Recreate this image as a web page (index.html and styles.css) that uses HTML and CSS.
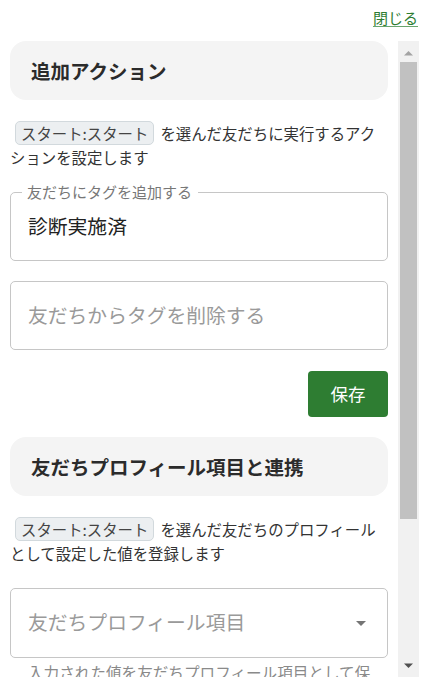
FILE: index.html
```html
<!DOCTYPE html>
<html lang="ja">
<head>
<meta charset="utf-8">
<title>追加アクション</title>
<link rel="stylesheet" href="styles.css">
</head>
<body>
<div class="top"><a class="close" href="#">閉じる</a></div>
<div class="panel">
  <div class="scroll">
    <section class="section">
      <div class="card-title"><h2>追加アクション</h2></div>
      <p class="desc"><span class="chip">スタート:スタート</span>を選んだ友だちに実行するアクションを設定します</p>
      <div class="field field-first">
        <span class="label">友だちにタグを追加する</span>
        <span class="value">診断実施済</span>
      </div>
      <div class="field">
        <span class="placeholder">友だちからタグを削除する</span>
      </div>
      <div class="actions"><button class="btn" type="button">保存</button></div>
    </section>
    <section class="section">
      <div class="card-title"><h2>友だちプロフィール項目と連携</h2></div>
      <p class="desc"><span class="chip">スタート:スタート</span>を選んだ友だちのプロフィールとして設定した値を登録します</p>
      <div class="field field-first select">
        <span class="placeholder">友だちプロフィール項目</span>
        <svg class="caret" viewBox="0 0 24 24" width="24" height="24" aria-hidden="true"><path d="M7 10l5 5 5-5z"/></svg>
      </div>
      <p class="helper">入力された値を友だちプロフィール項目として保存します。項目を選択しない場合は登録されません。</p>
      <div class="actions"><button class="btn" type="button">保存</button></div>
    </section>
  </div>
  <div class="scrollbar" aria-hidden="true">
    <div class="sb-btn sb-up"><svg width="9" height="5" viewBox="0 0 9 5"><polygon points="0,4.5 4.5,0 9,4.5"/></svg></div>
    <div class="sb-thumb"></div>
    <div class="sb-rest"></div>
    <div class="sb-btn sb-down"><svg width="9" height="5" viewBox="0 0 9 5"><polygon points="0,0.5 9,0.5 4.5,5"/></svg></div>
  </div>
</div>
</body>
</html>
```
FILE: styles.css
```css
html, body {
  margin: 0;
  padding: 0;
  background: #ffffff;
}

body {
  font-family: "Noto Sans CJK JP", "Noto Sans", sans-serif;
  color: #333333;
}

.top {
  height: 41px;
  box-sizing: border-box;
  display: flex;
  justify-content: flex-end;
  align-items: flex-start;
  padding: 8px 14px 0 0;
}

.close {
  font-size: 15px;
  line-height: 20px;
  color: #2e7d32;
  text-decoration: underline;
  text-decoration-color: #6aa56e;
  text-underline-offset: 2px;
}

.panel {
  display: flex;
  height: 636px;
  width: 419px;
}

.scroll {
  flex: 1;
  min-width: 0;
  overflow: hidden;
  padding: 0 10px;
}

.scrollbar {
  width: 21px;
  flex: none;
  background: #f1f1f1;
  display: flex;
  flex-direction: column;
}

.sb-btn {
  height: 21px;
  flex: none;
  display: flex;
  justify-content: center;
}

.sb-up {
  align-items: flex-start;
  padding-top: 10px;
  box-sizing: border-box;
}

.sb-up svg {
  fill: #a3a3a3;
}

.sb-down {
  align-items: flex-start;
  padding-top: 7px;
  box-sizing: border-box;
}

.sb-down svg {
  fill: #505050;
}

.sb-thumb {
  height: 457px;
  flex: none;
  margin: 0 2px;
  background: #c1c1c1;
}

.sb-rest {
  flex: 1;
}

.section {
  display: flex;
  flex-direction: column;
}

.card-title {
  height: 59px;
  box-sizing: border-box;
  background: #f4f4f4;
  border-radius: 16px;
  display: flex;
  align-items: center;
  padding: 0 21px;
}

.card-title h2 {
  margin: 0;
  font-size: 19.5px;
  line-height: 26px;
  font-weight: 700;
  color: #2b2b2b;
}

.desc {
  margin: 21px 0 0 0;
  font-size: 15.4px;
  line-height: 24px;
  color: #333333;
}

.chip {
  display: inline-block;
  box-sizing: border-box;
  height: 24px;
  line-height: 22px;
  padding: 0 5px;
  margin: 0 6px 0 5px;
  border: 1px solid #d2d9dd;
  border-radius: 5px;
  background: #eceff1;
  color: #444444;
  vertical-align: top;
}

.field {
  position: relative;
  height: 69px;
  box-sizing: border-box;
  border: 1px solid #c6c6c6;
  border-radius: 5px;
  margin-top: 20px;
  padding: 0 17px 2px 17px;
  display: flex;
  align-items: center;
  justify-content: space-between;
  font-size: 19.8px;
  line-height: 26px;
}

.field-first {
  margin-top: 23px;
}

.label {
  position: absolute;
  top: -11px;
  left: 11px;
  padding: 0 6px 0 5px;
  background: #ffffff;
  font-size: 15px;
  line-height: 20px;
  color: #777777;
}

.value {
  color: #222222;
}

.placeholder {
  color: #9a9a9a;
}

.select {
  height: 70px;
  padding-right: 14px;
}

.caret {
  fill: #757575;
  width: 24px;
  height: 24px;
  margin-top: 2px;
}

.helper {
  margin: 3px 0 0 0;
  padding: 0 4px 0 18px;
  font-size: 15.6px;
  line-height: 22px;
  color: #8a8a8a;
}

.actions {
  display: flex;
  justify-content: flex-end;
  margin-top: 21px;
  margin-bottom: 20px;
}

.btn {
  width: 80px;
  height: 46px;
  border: none;
  border-radius: 4px;
  background: #2e7d32;
  color: #ffffff;
  font-family: "Noto Sans CJK JP", "Noto Sans", sans-serif;
  font-size: 17.5px;
  line-height: 24px;
  padding: 0;
  cursor: pointer;
}
```
